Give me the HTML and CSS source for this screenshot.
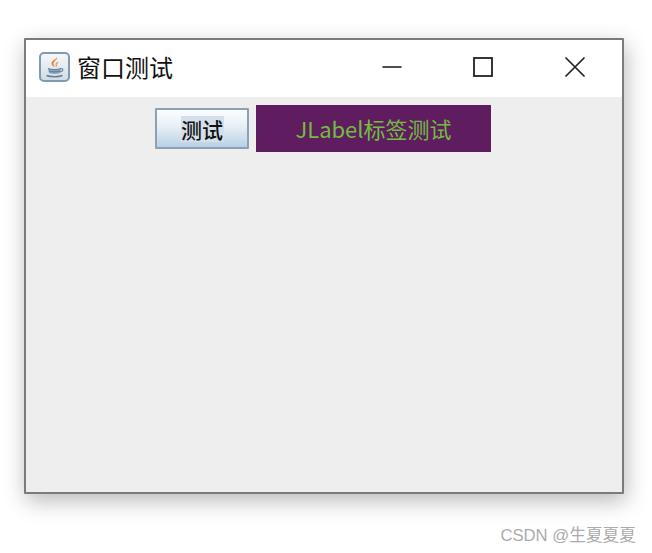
FILE: index.html
```html
<!DOCTYPE html>
<html lang="zh">
<head>
<meta charset="utf-8">
<title>窗口测试</title>
<link rel="stylesheet" href="styles.css">
</head>
<body>
<div class="window">
  <div class="titlebar">
    <div class="app-title">
      <svg class="java-icon" width="31" height="30" viewBox="0 0 31 30">
        <defs>
          <linearGradient id="ig" x1="0" y1="0" x2="0" y2="1">
            <stop offset="0" stop-color="#f7f9fb"/>
            <stop offset="1" stop-color="#cfdbe6"/>
          </linearGradient>
        </defs>
        <rect x="1" y="1" width="29" height="28" rx="4" fill="url(#ig)" stroke="#7f9ab2" stroke-width="2"/>
        <path d="M18 5c1.500 2.500-4 4-3.500 7 .2 1 .8 2 1.500 3-3-1-4.500-3-3-5.200 1.200-1.800 4.500-2.500 5-4.800z" fill="#e8862e"/>
        <path d="M19 10c-1.500 1-2.500 2.500-1.500 4.500" fill="none" stroke="#ea9a50" stroke-width="1.300"/>
        <path d="M9 16.500c3 1.300 10 1.300 13 0l-1 4.500c-2.500 1.200-8.500 1.200-11 0z" fill="#8ea4b8"/>
        <path d="M9 16.500c3 1.300 10 1.300 13 0M10 19c3 1 8 1 11 0" fill="none" stroke="#5f7f9b" stroke-width="1.200"/>
        <path d="M22 16.800c2.800-.5 2.500 2.700-1.200 3.200" fill="none" stroke="#5f7f9b" stroke-width="1.100"/>
        <path d="M7.500 23.500c4 1.500 12 1.500 16 0" fill="none" stroke="#5f7f9b" stroke-width="1.500"/>
      </svg>
      <span class="title-text">窗口测试</span>
    </div>
    <div class="controls">
      <svg class="ctl ctl-min" width="20" height="20" viewBox="0 0 20 20"><path d="M0.500 10H19.500" stroke="#222" stroke-width="1.600"/></svg>
      <svg class="ctl ctl-max" width="20" height="20" viewBox="0 0 20 20"><rect x="1" y="1" width="18" height="18" fill="none" stroke="#222" stroke-width="1.800"/></svg>
      <svg class="ctl ctl-close" width="22" height="22" viewBox="0 0 22 22"><path d="M1.500 1.500L20.500 20.500M20.500 1.500L1.500 20.500" stroke="#222" stroke-width="1.700"/></svg>
    </div>
  </div>
  <div class="content">
    <button class="java-btn" type="button"><span class="focus-text">测试</span></button>
    <div class="jlabel">JLabel标签测试</div>
  </div>
</div>
<div class="watermark">CSDN @生夏夏夏</div>
</body>
</html>
```

FILE: styles.css
```css
html, body {
  margin: 0;
  padding: 0;
  background: #fff;
  overflow: hidden;
}

body {
  width: 652px;
  height: 553px;
  padding: 38px 0 0 24px;
  box-sizing: border-box;
  font-family: "Noto Sans CJK SC", "Noto Sans", sans-serif;
}

.window {
  width: 600px;
  height: 456px;
  box-sizing: border-box;
  border: 2px solid #7b7b7b;
  border-radius: 1px;
  background: #eeeeee;
  box-shadow: 2px 7px 22px rgba(0, 0, 0, 0.28);
  display: flex;
  flex-direction: column;
}

.titlebar {
  height: 57px;
  box-sizing: border-box;
  padding-bottom: 3px;
  flex: none;
  background: #fff;
  display: flex;
  align-items: center;
  justify-content: space-between;
}

.app-title {
  display: flex;
  align-items: center;
  gap: 7px;
  padding-left: 13px;
}

.java-icon {
  flex: none;
}

.title-text {
  font-size: 24px;
  line-height: 30px;
  color: #111;
}

.controls {
  display: flex;
  align-items: center;
  padding-right: 36px;
}

.ctl-min {
  margin-right: 71px;
}

.ctl-max {
  margin-right: 71px;
}

.content {
  flex: 1;
  display: flex;
  justify-content: center;
  align-items: flex-start;
  gap: 7px;
  padding: 8px 2px 0 0;
}

.java-btn {
  width: 94px;
  height: 41px;
  margin: 3px 0 0;
  padding: 0;
  box-sizing: border-box;
  border: 2px solid #8aa1b6;
  border-radius: 1px;
  background: linear-gradient(to bottom, #fcfdfe 0%, #e6eff7 45%, #b9d0e5 100%);
  display: flex;
  align-items: center;
  justify-content: center;
  font-family: inherit;
}

.focus-text {
  display: block;
  width: 43px;
  height: 26px;
  background: #d3dfea;
  font-size: 21px;
  line-height: 26px;
  font-weight: 500;
  color: #111;
  white-space: nowrap;
}

.jlabel {
  width: 235px;
  height: 47px;
  background: #5f1d5f;
  color: #72bd3e;
  font-size: 22px;
  line-height: 47px;
  text-align: center;
  white-space: nowrap;
}

.watermark {
  width: 612px;
  margin-top: 30px;
  text-align: right;
  font-family: "Liberation Sans", "Noto Sans CJK SC", sans-serif;
  font-size: 16.700px;
  line-height: 24px;
  color: #ababab;
  white-space: nowrap;
}
```
